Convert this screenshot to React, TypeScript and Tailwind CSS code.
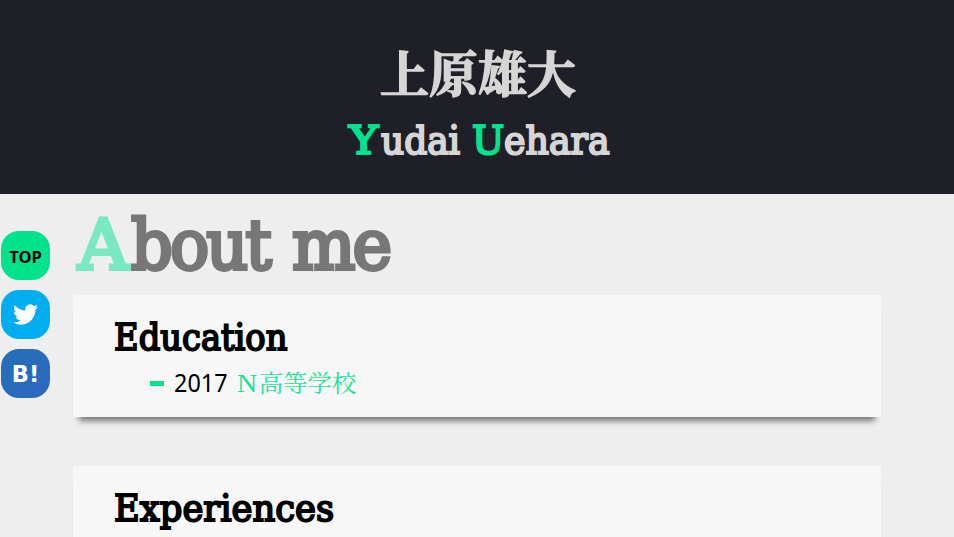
import type { ReactNode } from "react";

const slab = "font-['DejaVu_Serif','Noto_Serif_CJK_JP',serif] font-normal whitespace-nowrap";

function Card({ title, children }: { title: ReactNode; children?: ReactNode }) {
  return (
    <section className="h-[122px] w-[808px] bg-[#f7f7f7] pl-[41px] pt-5 shadow-[0_10px_6px_-6px_#777]">
      <h3 className={`${slab} h-[46px] text-[37.5px] leading-[45px] [-webkit-text-stroke:2px_black]`}>{title}</h3>
      {children}
    </section>
  );
}

export default function App() {
  return (
    <div className="relative h-[537px] w-[954px] overflow-hidden bg-[#eee]">
      <header className="flex h-[194px] flex-col items-center bg-[#1f1f27] pt-[43px] text-[#d6d6d6]">
        <h1 className="ml-[2px] h-[56px] whitespace-nowrap font-['Noto_Serif_CJK_JP','Noto_Sans_CJK_JP',serif] text-[49px] font-bold leading-[56px] [-webkit-text-stroke:1.5px_#d6d6d6]">上原雄大</h1>
        <h2 className={`${slab} ml-[6px] mt-[17px] flex h-12 w-[262px] text-[39.5px] leading-[48px] [-webkit-text-stroke:2.2px_currentColor]`}>
          <span className="w-[32px] shrink-0 text-[#00e38c]">
            <span className="inline-block origin-left scale-x-[1.12]">Y</span>
          </span>
          <span className="w-[91px] shrink-0">
            <span className="inline-block origin-left scale-x-[0.91]">udai</span>
          </span>
          <span className="w-[32px] shrink-0 text-[#00e38c]">
            <span className="inline-block origin-left scale-x-[0.97]">U</span>
          </span>
          <span className="inline-block shrink-0 origin-left scale-x-[0.92]">ehara</span>
        </h2>
      </header>

      <main className="pl-[73px]">
        <h2 className={`${slab} flex h-[101px] pl-[5px] pt-[13px] text-[69px] leading-[76px] text-[#777] [-webkit-text-stroke:3.8px_currentColor]`}>
          <span className="w-[53px] text-[#78e9c0]">
            <span className="inline-block origin-left scale-x-[1.02]">A</span>
          </span>
          <span className="w-[161px]">
            <span className="inline-block origin-left scale-x-[0.945] tracking-[-3px]">bout</span>
          </span>
          <span className="inline-block origin-left scale-x-[0.97] tracking-[-3px]">me</span>
        </h2>
        <div className="flex flex-col gap-[49px]">
          <Card title={<span className="inline-block origin-left scale-x-[0.9]">Education</span>}>
            <div className="flex h-11 items-center whitespace-nowrap pl-[36px] leading-[44px]">
              <span className="mr-[10px] h-[5px] w-[14px] bg-[#00e38c]" />
              <span className="mt-[-3px] w-[63px] font-['Noto_Sans',sans-serif] text-[26px]">
                <span className="inline-block origin-left scale-x-[0.9]">2017</span>
              </span>
              <a className="-mt-px flex font-['Noto_Serif_CJK_JP',serif] text-[24.3px] text-[#1ce39a]">
                <span className="w-[22px]">
                  <span className="inline-block origin-left scale-x-[1.15] font-['Liberation_Serif',serif]">N</span>
                </span>
                <span>高等学校</span>
              </a>
            </div>
          </Card>
          <Card title={<span className="inline-block origin-left scale-x-[0.943]">Experiences</span>} />
        </div>
      </main>

      <nav className="absolute left-px top-[231px] flex flex-col gap-[10px]">
        <a className="flex size-[49px] items-center justify-center rounded-[18px] bg-[#00e38c] pt-[3px] font-['Noto_Sans',sans-serif] text-[16.5px] font-bold text-black">TOP</a>
        <a className="flex size-[49px] items-center justify-center rounded-[18px] bg-[#00aeef]">
          <svg className="h-[25px] w-[25px]" viewBox="0 0 24 24" fill="white">
            <path d="M23.95 4.57a10 10 0 0 1-2.82.77 4.96 4.96 0 0 0 2.16-2.72c-.95.55-2 .95-3.13 1.18a4.92 4.92 0 0 0-8.38 4.48C7.69 8.09 4.07 6.13 1.64 3.16a4.92 4.92 0 0 0 1.52 6.57 4.9 4.9 0 0 1-2.23-.61v.06a4.92 4.92 0 0 0 3.95 4.83 5 5 0 0 1-2.21.08 4.94 4.94 0 0 0 4.6 3.42A9.87 9.87 0 0 1 0 19.54a13.99 13.99 0 0 0 7.56 2.21c9.05 0 14-7.5 14-13.98 0-.21 0-.42-.02-.63a9.94 9.94 0 0 0 2.41-2.57z" />
          </svg>
        </a>
        <a className="flex size-[49px] items-center justify-center rounded-[18px] bg-gradient-to-br from-[#2470b5] to-[#2b68c0] pt-[2px] font-['DejaVu_Sans',sans-serif] text-[22.5px] font-bold text-white">B!</a>
      </nav>
    </div>
  );
}
